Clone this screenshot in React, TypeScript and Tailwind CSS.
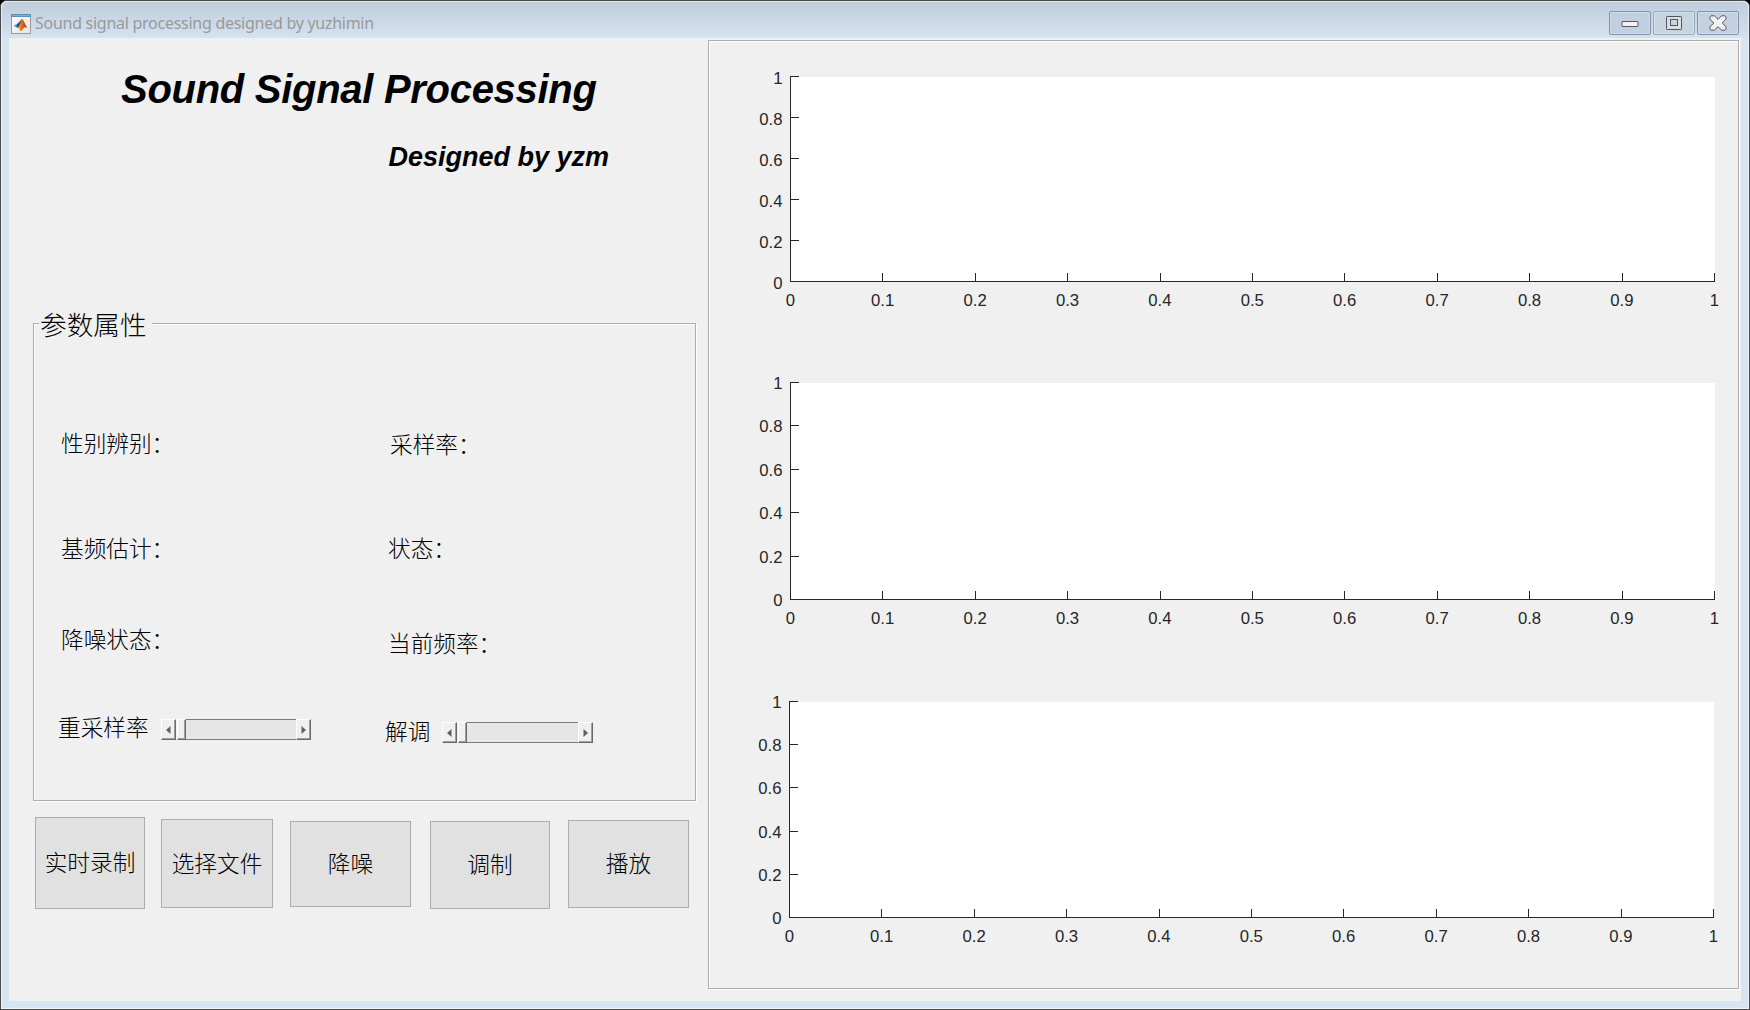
import React from "react";

const X_TICKS = ["0", "0.1", "0.2", "0.3", "0.4", "0.5", "0.6", "0.7", "0.8", "0.9", "1"];
const Y_TICKS = ["1", "0.8", "0.6", "0.4", "0.2", "0"];

const CJK = "font-['Liberation_Sans','Noto_Sans_CJK_SC',sans-serif]";

/* Empty MATLAB-style axes; origin of the plot box is 40px in from the left edge. */
function Axes({ height, labelDrop, className }: { height: number; labelDrop: number; className: string }) {
  const left = 40;
  const top = 10;
  const width = 924;
  const bottom = top + height;
  return (
    <svg
      width={990}
      height={height + 45}
      className={`block shrink-0 font-['Liberation_Sans',Arial,sans-serif] text-[16.7px] ${className}`}
    >
      <rect x={left} y={top + 1} width={width + 1} height={height} fill="#fff" />
      <g fill="#262626" shapeRendering="crispEdges">
        <rect x={left} y={top} width={1} height={height + 1} />
        <rect x={left} y={bottom} width={width + 1} height={1} />
        {Y_TICKS.map((t, i) => (
          <rect key={t} x={left} y={Math.round(top + (height * i) / 5)} width={9} height={1} />
        ))}
        {X_TICKS.map((t, i) => (
          <rect key={t} x={Math.round(left + (width * i) / 10)} y={bottom - 8} width={1} height={9} />
        ))}
      </g>
      <g fill="#262626">
        {Y_TICKS.map((t, i) => (
          <text key={t} x={left - 7.5} y={Math.round(top + (height * i) / 5) + labelDrop} textAnchor="end">
            {t}
          </text>
        ))}
        {X_TICKS.map((t, i) => (
          <text key={t} x={left + (width * i) / 10 + 0.3} y={bottom + 25} textAnchor="middle">
            {t}
          </text>
        ))}
      </g>
    </svg>
  );
}

function ArrowButton({ dir }: { dir: "left" | "right" }) {
  return (
    <div className="flex h-[21px] w-[15px] shrink-0 items-center justify-center border border-t-white border-l-white border-r-[#696969] border-b-[#696969] bg-[#f0f0f0] [box-shadow:inset_-1px_-1px_0_#a0a0a0]">
      <svg width="5" height="8" viewBox="0 0 5 8">
        <path d={dir === "left" ? "M4.5 0V8L0 4Z" : "M0.5 0V8L5 4Z"} fill="#606060" />
      </svg>
    </div>
  );
}

function Slider({ className }: { className: string }) {
  return (
    <div className={`flex h-[21px] shrink-0 ${className}`}>
      <ArrowButton dir="left" />
      <div className="ml-px h-[21px] w-[9px] shrink-0 border border-t-white border-l-white border-r-[#696969] border-b-[#696969] bg-[#f0f0f0] [box-shadow:inset_-1px_-1px_0_#a0a0a0]" />
      <div className="h-[21px] grow border-y border-[#7a7a7a] bg-[#e6e6e6]" />
      <ArrowButton dir="right" />
    </div>
  );
}

function Label({ children, className }: { children: React.ReactNode; className: string }) {
  return <div className={`h-6 text-[22.67px] leading-6 font-light whitespace-nowrap ${className}`}>{children}</div>;
}

function PushButton({ children, className }: { children: React.ReactNode; className: string }) {
  return (
    <button
      className={`flex shrink-0 items-center justify-center border border-[#adadad] bg-[#e1e1e1] text-[22.67px] leading-6 font-light whitespace-nowrap ${className}`}
    >
      {children}
    </button>
  );
}

function CaptionButton({ children, className }: { children: React.ReactNode; className: string }) {
  return (
    <div
      className={`flex h-6 w-[42px] items-center justify-center rounded-[2px] border [box-shadow:inset_0_0_0_1px_rgba(255,255,255,0.25)] ${className}`}
    >
      {children}
    </div>
  );
}

function MatlabIcon() {
  return (
    <svg width="20" height="20" viewBox="0 0 20 20" className="mt-[12px] shrink-0">
      <defs>
        <linearGradient id="membrane" x1="0" x2="1">
          <stop offset="0" stopColor="#f6c04a" />
          <stop offset="0.45" stopColor="#e2661c" />
          <stop offset="1" stopColor="#a62a14" />
        </linearGradient>
        <linearGradient id="paper" x1="0" y1="0" x2="1" y2="1">
          <stop offset="0" stopColor="#ffffff" />
          <stop offset="1" stopColor="#e4e4e4" />
        </linearGradient>
      </defs>
      <rect x="0.5" y="0.5" width="19" height="19" fill="url(#paper)" stroke="#9a9a9a" />
      <rect x="0" y="0" width="20" height="3" fill="#5d8fb3" />
      <rect x="1" y="1" width="18" height="0.8" fill="#8fb7d2" />
      <path d="M2.5 11.5L6.3 9.7L8.6 11.2L6.4 14.2Z" fill="#4fa3d1" />
      <path d="M6.3 9.7C8.2 9 9.4 6 11 5L9.2 11.6L7.6 13.2L5.6 13Z" fill="#27506f" />
      <path d="M11 4.8C12.6 5.2 14.4 11 16.6 14.6C14.6 12.6 13.2 13 11.6 15.4C10.8 16.8 9.8 17.4 9 17C8.6 15.4 8 14 6.6 14C8.8 12.6 9.8 7.4 11 4.8Z" fill="url(#membrane)" />
    </svg>
  );
}

export default function App() {
  return (
    <div className={`h-[1010px] w-[1750px] overflow-hidden bg-black text-black ${CJK}`}>
      <div className="flex h-full w-full flex-col rounded-t-[7px] border border-[#4a4a4c] bg-[#d7e4f2] [box-shadow:inset_0_0_0_1px_#eef5fb]">
        <header className="flex h-[37px] shrink-0 rounded-t-[6px] border-x border-t border-[#e3ebf3] bg-linear-to-b from-[#bfcddc] to-[#d5e2f0] pl-[9px]">
          <MatlabIcon />
          <span className="mt-[9px] ml-[4px] font-['Noto_Sans','Open_Sans',sans-serif] text-[16px] leading-6 tracking-[-0.27px] text-[#999]">
            Sound signal processing designed by yuzhimin
          </span>
          <div className="mt-[9px] mr-[9px] ml-auto flex gap-[2px]">
            <CaptionButton className="border-[#8293ae] bg-[#c1cfdf]">
              <svg width="18" height="8" viewBox="0 0 18 8" className="mt-px -ml-px">
                <rect x="1" y="1.5" width="16" height="5" rx="0.6" fill="#f3f3f3" stroke="#535666" />
              </svg>
            </CaptionButton>
            <CaptionButton className="border-[#9babb9] bg-[#c7d5e3]">
              <svg width="18" height="16" viewBox="0 0 18 16" className="-mt-px -ml-px">
                <rect x="1.5" y="1.5" width="15" height="13" rx="0.6" fill="#dedede" stroke="#535666" />
                <rect x="5.5" y="4.5" width="7" height="6" fill="#c7d5e3" stroke="#535666" />
              </svg>
            </CaptionButton>
            <CaptionButton className="border-[#8293ae] bg-[#c3d1e0]">
              <svg width="18" height="16" viewBox="0 0 18 16" className="-mt-px -ml-px">
                <path
                  d="M2 0.8H5.4L9 4.4L12.6 0.8H16L17 1.8V4.2L13.2 8L17 11.8V14.2L16 15.2H12.6L9 11.6L5.4 15.2H2L1 14.2V11.8L4.8 8L1 4.2V1.8Z"
                  fill="#f1f1f1"
                  stroke="#535666"
                  strokeLinejoin="round"
                />
              </svg>
            </CaptionButton>
          </div>
        </header>

        <main className="mx-2 flex h-[963px] shrink-0 bg-[#f0f0f0]">
          <section className="flex w-[699px] shrink-0 flex-col">
            <h1 className="mt-[27px] ml-[112px] h-12 font-['Liberation_Sans',Arial,sans-serif] text-[40px] leading-[48px] font-bold tracking-[-0.29px] whitespace-nowrap italic">
              Sound Signal Processing
            </h1>
            <h2 className="mt-[28px] ml-[379.5px] h-8 font-['Liberation_Sans',Arial,sans-serif] text-[27px] leading-8 font-bold whitespace-nowrap italic">
              Designed by yzm
            </h2>

            <div className="mt-[150px] ml-6 flex h-[478px] w-[663px] shrink-0 flex-col border border-[#adadad] [box-shadow:1px_1px_0_#fff,inset_1px_1px_0_#fff]">
              <div className="-mt-[14px] ml-[5px] h-8 w-[113px] bg-[#f0f0f0] pl-px text-[26.67px] leading-8 font-light whitespace-nowrap">
                参数属性
              </div>
              <div className="mt-[90px] flex">
                <Label className="ml-[27px] w-[329px]">性别辨别：</Label>
                <Label className="mt-px">采样率：</Label>
              </div>
              <div className="mt-[80px] flex">
                <Label className="ml-[27px] w-[327px]">基频估计：</Label>
                <Label className="">状态：</Label>
              </div>
              <div className="mt-[67px] flex">
                <Label className="ml-[27px] w-[327px]">降噪状态：</Label>
                <Label className="mt-1">当前频率：</Label>
              </div>
              <div className="mt-[60px] flex">
                <Label className="ml-[24px] w-[103px]">重采样率</Label>
                <Slider className="mt-[3px] w-[150px]" />
                <Label className="mt-1 ml-[74px] w-[57px]">解调</Label>
                <Slider className="mt-[6px] w-[151px]" />
              </div>
            </div>

            <div className="mt-4 ml-[26px] flex items-start">
              <PushButton className="h-[92px] w-[110px]">实时录制</PushButton>
              <PushButton className="mt-[2px] ml-4 h-[89px] w-[112px]">选择文件</PushButton>
              <PushButton className="mt-1 ml-[17px] h-[86px] w-[121px]">降噪</PushButton>
              <PushButton className="mt-1 ml-[19px] h-[88px] w-[120px]">调制</PushButton>
              <PushButton className="mt-[3px] ml-[18px] h-[88px] w-[121px]">播放</PushButton>
            </div>
          </section>

          <section className="mt-[2px] flex h-[949px] w-[1031px] shrink-0 flex-col border border-[#adadad] [box-shadow:1px_1px_0_#fff,inset_1px_1px_0_#fff]">
            <Axes height={205} labelDrop={8} className="mt-[25px] ml-[41px]" />
            <Axes height={217} labelDrop={7.4} className="mt-[56px] ml-[41px]" />
            <Axes height={216} labelDrop={7} className="mt-[57px] ml-[40px]" />
          </section>
        </main>
      </div>
    </div>
  );
}
